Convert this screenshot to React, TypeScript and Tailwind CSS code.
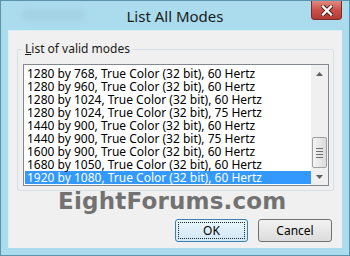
import React from "react";

const rows = [
  "1280 by 768, True Color (32 bit), 60 Hertz",
  "1280 by 960, True Color (32 bit), 60 Hertz",
  "1280 by 1024, True Color (32 bit), 60 Hertz",
  "1280 by 1024, True Color (32 bit), 75 Hertz",
  "1440 by 900, True Color (32 bit), 60 Hertz",
  "1440 by 900, True Color (32 bit), 75 Hertz",
  "1600 by 900, True Color (32 bit), 60 Hertz",
  "1680 by 1050, True Color (32 bit), 60 Hertz",
  "1920 by 1080, True Color (32 bit), 60 Hertz",
];

export default function App() {
  const ui = { fontFamily: '"Noto Sans", "Open Sans", sans-serif' };
  return (
    <div
      className="relative w-[350px] h-[256px] bg-[#abdcee] border border-[#5b93ad] flex flex-col overflow-hidden"
      style={ui}
    >
      {/* title bar */}
      <div className="relative h-[29px] shrink-0 flex items-center justify-center">
        <span className="text-[15px] text-[#1a1a1a] leading-none mt-[1px]">List All Modes</span>
        <div className="absolute left-[20px] top-[8px] w-[64px] h-[12px] rounded bg-[#9cc8d9] opacity-50 blur-[3px]" />
        <div className="absolute right-[7px] top-[-1px] w-[31px] h-[20px] rounded-b-[3px] border border-[#7d2a2a] bg-gradient-to-b from-[#e08a80] via-[#c9514a] to-[#b23a34] flex items-center justify-center">
          <svg width="12" height="11" viewBox="0 0 12 11">
            <path d="M2 1.5 L10 9.5 M10 1.5 L2 9.5" stroke="#4a1414" strokeWidth="4" strokeLinecap="square" />
            <path d="M2 1.5 L10 9.5 M10 1.5 L2 9.5" stroke="#ffffff" strokeWidth="2.4" strokeLinecap="square" />
          </svg>
        </div>
      </div>

      {/* client area */}
      <div className="relative mx-[7px] h-[218px] bg-[#f0f0f0] border-t border-l border-[#d9eef6] flex flex-col">
        {/* group box */}
        <div className="relative ml-[8px] mt-[18px] w-[317px] h-[142px] border border-[#d5dfe5] rounded-[2px]">
          <div className="absolute left-[5px] top-[-9px] bg-[#f0f0f0] px-[2px] text-[12px] leading-[16px] text-[#1a1a1a]">
            <span className="underline">L</span>ist of valid modes
          </div>
          {/* list box */}
          <div className="absolute left-[5px] top-[14px] w-[306px] h-[122px] border border-[#828790] bg-white flex">
            <div className="flex-1 pt-[2px] pl-[1px]">
              {rows.map((r, i) => (
                <div
                  key={i}
                  className={
                    "h-[13px] leading-[13px] text-[12px] pl-[2px] whitespace-nowrap " +
                    (i === rows.length - 1 ? "bg-[#3399ff] text-white" : "text-black")
                  }
                >
                  {r}
                </div>
              ))}
            </div>
            {/* scrollbar */}
            <div className="w-[17px] bg-[#f0f0f0] flex flex-col items-center">
              <div className="h-[17px] w-full flex items-center justify-center">
                <svg width="7" height="4" viewBox="0 0 7 4">
                  <path d="M0 4 L3.5 0 L7 4 Z" fill="#606060" />
                </svg>
              </div>
              <div className="flex-1 w-full" />
              <div className="w-[15px] h-[31px] border border-[#a0a0a0] rounded-[2px] bg-gradient-to-r from-[#f4f4f4] to-[#dcdcdc] flex flex-col items-center justify-center gap-[2px]">
                <div className="w-[7px] h-[1px] bg-[#707070]" />
                <div className="w-[7px] h-[1px] bg-[#707070]" />
                <div className="w-[7px] h-[1px] bg-[#707070]" />
                <div className="w-[7px] h-[1px] bg-[#707070]" />
              </div>
              <div className="h-[17px] w-full flex items-center justify-center">
                <svg width="7" height="4" viewBox="0 0 7 4">
                  <path d="M0 0 L3.5 4 L7 0 Z" fill="#606060" />
                </svg>
              </div>
            </div>
          </div>
        </div>

        {/* buttons */}
        <div className="mt-[28px] flex justify-end gap-[10px] pr-[10px]">
          <div className="w-[73px] h-[23px] rounded-[3px] border border-[#3c7fb1] bg-gradient-to-b from-[#eaf6fd] to-[#d0e7f5] p-[2px]">
            <div className="w-full h-full border border-dotted border-[#222] flex items-center justify-center text-[12px] text-black leading-none">
              OK
            </div>
          </div>
          <div className="w-[74px] h-[23px] rounded-[3px] border border-[#707070] bg-gradient-to-b from-[#f2f2f2] to-[#dcdcdc] flex items-center justify-center text-[12px] text-black leading-none">
            Cancel
          </div>
        </div>
      </div>

      {/* watermark */}
      <div
        className="absolute left-[57px] top-[189px] text-[23px] font-bold text-[#727272] leading-none tracking-[0.2px]"
        style={{ fontFamily: '"DejaVu Sans", Verdana, sans-serif' }}
      >
        EightForums.com
      </div>
    </div>
  );
}
